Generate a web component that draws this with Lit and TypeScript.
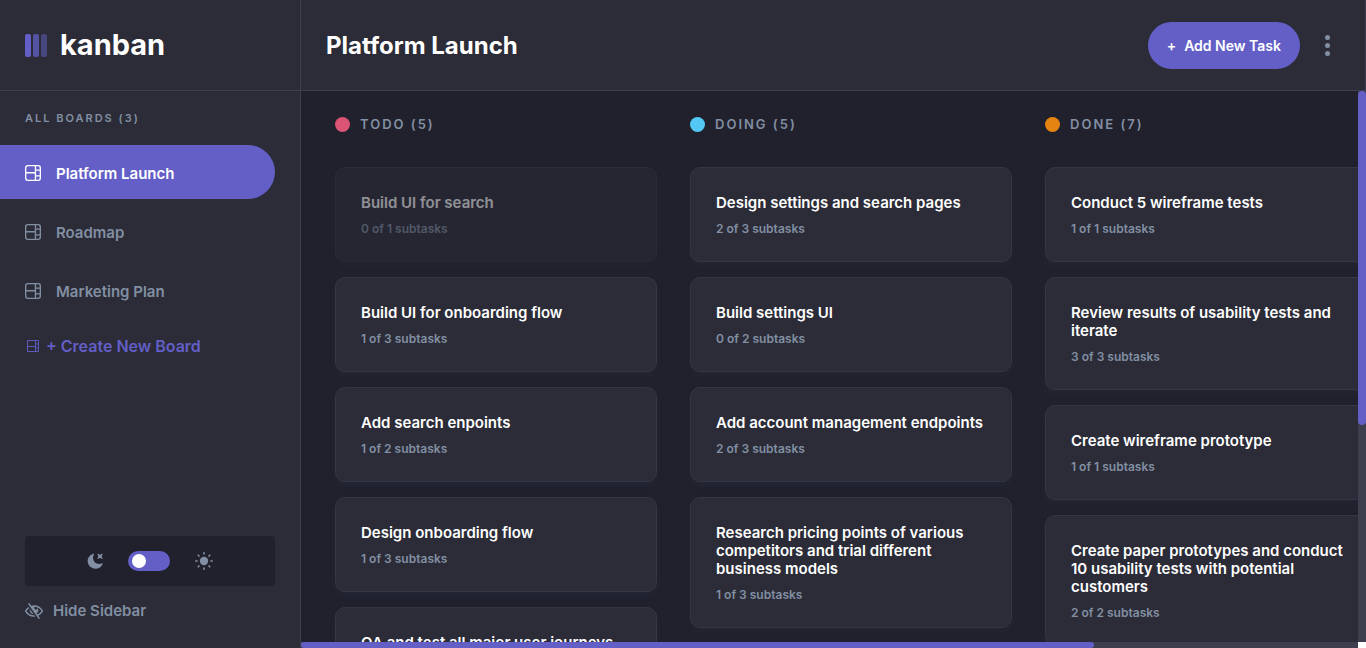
import { LitElement, html, css, svg } from "lit";
import { customElement, property, query, state } from "lit/decorators.js";
import { classMap } from "lit/directives/class-map.js";
import { styleMap } from "lit/directives/style-map.js";

interface Task {
  title: string;
  done: number;
  total: number;
  dragging?: boolean;
}

interface Column {
  name: string;
  tone: "todo" | "doing" | "done";
  tasks: Task[];
}

const COLUMNS: Column[] = [
  {
    name: "TODO",
    tone: "todo",
    tasks: [
      { title: "Build UI for search", done: 0, total: 1, dragging: true },
      { title: "Build UI for onboarding flow", done: 1, total: 3 },
      { title: "Add search enpoints", done: 1, total: 2 },
      { title: "Design onboarding flow", done: 1, total: 3 },
      { title: "QA and test all major user journeys", done: 0, total: 2 },
    ],
  },
  {
    name: "DOING",
    tone: "doing",
    tasks: [
      { title: "Design settings and search pages", done: 2, total: 3 },
      { title: "Build settings UI", done: 0, total: 2 },
      { title: "Add account management endpoints", done: 2, total: 3 },
      { title: "Research pricing points of various competitors and trial different business models", done: 1, total: 3 },
      { title: "Add authentication endpoints", done: 1, total: 2 },
    ],
  },
  {
    name: "DONE",
    tone: "done",
    tasks: [
      { title: "Conduct 5 wireframe tests", done: 1, total: 1 },
      { title: "Review results of usability tests and iterate", done: 3, total: 3 },
      { title: "Create wireframe prototype", done: 1, total: 1 },
      { title: "Create paper prototypes and conduct 10 usability tests with potential customers", done: 2, total: 2 },
      { title: "Market discovery", done: 1, total: 1 },
      { title: "Competitor analysis", done: 2, total: 2 },
      { title: "Research the market", done: 2, total: 2 },
    ],
  },
];

const boardGlyph = svg`<path fill="currentColor" d="M0 2.889A2.889 2.889 0 0 1 2.889 0H13.11A2.889 2.889 0 0 1 16 2.889V13.11A2.888 2.888 0 0 1 13.111 16H2.89A2.889 2.889 0 0 1 0 13.111V2.89Zm1.333 5.555v4.667c0 .859.697 1.556 1.556 1.556h6.889V8.444H1.333Zm8.445-1.333V1.333h-6.89A1.556 1.556 0 0 0 1.334 2.89V7.11h8.445Zm4.889-1.333H11.11v4.444h3.556V5.778Zm0 5.778H11.11v3.11h2a1.556 1.556 0 0 0 1.556-1.555v-1.555Zm0-7.112V2.89a1.555 1.555 0 0 0-1.556-1.556h-2v3.111h3.556Z"/>`;

const sunRays = [0, 45, 90, 135, 180, 225, 270, 315];

@customElement("task-card")
class TaskCard extends LitElement {
  @property({ attribute: false }) task!: Task;

  static styles = css`
    :host { display: block; }
    .card {
      display: flex;
      flex-direction: column;
      gap: 9px;
      padding: 26px 15px 25px 25px;
      background: #2b2c37;
      border: 1px solid #353642;
      border-radius: 10px;
      box-shadow: 0 4px 6px rgba(54, 78, 126, 0.1);
      cursor: pointer;
    }
    .card.dragging { opacity: 0.5; }
    .title {
      margin: 0;
      color: #fff;
      font-size: 15px;
      font-weight: 600;
      line-height: 18px;
    }
    .count {
      margin: 0;
      color: #828fa3;
      font-size: 12px;
      font-weight: 600;
      line-height: 15px;
    }
  `;

  render() {
    const { title, done, total, dragging } = this.task;
    return html`
      <article class=${classMap({ card: true, dragging: !!dragging })}>
        <h3 class="title">${title}</h3>
        <p class="count">${done} of ${total} subtasks</p>
      </article>
    `;
  }
}

@customElement("board-sidebar")
class BoardSidebar extends LitElement {
  @property({ attribute: false }) boards: string[] = [];
  @property() current = "";

  static styles = css`
    :host {
      display: flex;
      flex-direction: column;
      box-sizing: border-box;
      min-height: 0;
      padding: 20px 25px 22px 0;
      background: #2b2c37;
      border-right: 1px solid #3e3f4e;
      color: #828fa3;
    }
    .label {
      margin: 0 0 19px;
      padding-left: 25px;
      font-size: 11px;
      font-weight: 600;
      line-height: 15px;
      letter-spacing: 2px;
    }
    .boards {
      display: flex;
      flex-direction: column;
      gap: 5px;
      margin: 0;
      padding: 0;
      list-style: none;
    }
    .board {
      display: flex;
      align-items: center;
      box-sizing: border-box;
      gap: 15px;
      height: 54px;
      padding: 2px 0 0 25px;
      border-radius: 0 27px 27px 0;
      color: inherit;
      font-size: 15px;
      font-weight: 600;
      text-decoration: none;
    }
    .board.active { background: #635fc7; color: #fff; }
    .icon { flex: none; width: 16px; height: 16px; }
    .create {
      display: flex;
      align-items: center;
      align-self: flex-start;
      gap: 7px;
      margin-top: 18px;
      padding: 0 0 0 27px;
      border: 0;
      background: none;
      color: #635fc7;
      font: inherit;
      font-size: 16px;
      font-weight: 600;
      line-height: 22px;
      cursor: pointer;
    }
    .create .icon { width: 12px; height: 12px; }
    .foot {
      display: flex;
      flex-direction: column;
      gap: 10px;
      margin-top: auto;
      padding-left: 25px;
    }
    .theme {
      display: flex;
      align-items: center;
      justify-content: center;
      gap: 25px;
      height: 50px;
      border-radius: 4px;
      background: #20212c;
    }
    .theme .sun { width: 18px; height: 18px; }
    .switch {
      appearance: none;
      display: flex;
      align-items: center;
      width: 42px;
      height: 20px;
      margin: 0;
      padding: 0 4px;
      border-radius: 10px;
      background: #635fc7;
      cursor: pointer;
    }
    .switch::before {
      content: "";
      width: 14px;
      height: 14px;
      border-radius: 50%;
      background: #fff;
    }
    .switch:checked { justify-content: flex-end; }
    .hide {
      display: flex;
      align-items: center;
      align-self: flex-start;
      gap: 10px;
      padding: 0;
      border: 0;
      background: none;
      color: inherit;
      font: inherit;
      font-size: 15px;
      font-weight: 600;
      line-height: 30px;
      cursor: pointer;
    }
    .hide .icon { width: 18px; }
  `;

  render() {
    return html`
      <h2 class="label">ALL BOARDS (${this.boards.length})</h2>
      <ul class="boards">
        ${this.boards.map(
          (name) => html`
            <li>
              <a href="#" class=${classMap({ board: true, active: name === this.current })}>
                <svg class="icon" viewBox="0 0 16 16" aria-hidden="true">${boardGlyph}</svg>
                <span>${name}</span>
              </a>
            </li>
          `
        )}
      </ul>
      <button class="create" type="button">
        <svg class="icon" viewBox="0 0 12 12" fill="none" stroke="currentColor" aria-hidden="true">
          <path d="M.5.5h11v11H.5zM8.5.5v11M.5 6.5h8M8.5 4h3M8.5 8h3" stroke-width=".9" />
        </svg>
        <span>+ Create New Board</span>
      </button>
      <div class="foot">
        <div class="theme">
          <svg class="icon" viewBox="0 0 16 16" aria-hidden="true">
            <path fill="currentColor" d="M6.474.682c.434-.11.718.406.481.78A6.067 6.067 0 0 0 6.01 4.72c0 3.418 2.827 6.187 6.314 6.187.89.002 1.77-.182 2.584-.54.408-.18.894.165.724.57-1.16 2.775-3.944 4.73-7.194 4.73-4.292 0-7.771-3.41-7.771-7.615 0-3.541 2.466-6.518 5.807-7.37Zm8.433.07c.442-.294.969.232.674.674l-.525.787a1.943 1.943 0 0 0 0 2.157l.525.788c.295.441-.232.968-.674.673l-.787-.525a1.943 1.943 0 0 0-2.157 0l-.786.525c-.442.295-.97-.232-.675-.673l.525-.788a1.943 1.943 0 0 0 0-2.157l-.525-.787c-.295-.442.232-.968.674-.673l.787.525a1.943 1.943 0 0 0 2.157 0Z" />
          </svg>
          <input class="switch" type="checkbox" role="switch" aria-label="Light theme" />
          <svg class="sun" viewBox="0 0 18 18" aria-hidden="true">
            <circle cx="9" cy="9" r="4.2" fill="currentColor" />
            <g stroke="currentColor" stroke-width="1.6" stroke-linecap="round">
              ${sunRays.map((a) => svg`<path d="M9 .8v1.2" transform=${`rotate(${a} 9 9)`} />`)}
            </g>
          </svg>
        </div>
        <button class="hide" type="button">
          <svg class="icon" viewBox="0 0 18 16" aria-hidden="true">
            <path fill="currentColor" d="M8.522 11.223a4.252 4.252 0 0 1-3.654-5.22l3.654 5.22ZM9 12.25A8.685 8.685 0 0 1 1.5 8a8.612 8.612 0 0 1 2.76-2.864l-.86-1.23A10.112 10.112 0 0 0 .208 7.238a1.5 1.5 0 0 0 0 1.524A10.187 10.187 0 0 0 9 13.75c.414 0 .828-.025 1.239-.074l-1-1.43A8.88 8.88 0 0 1 9 12.25Zm8.792-3.488a10.14 10.14 0 0 1-4.486 4.046l1.504 2.148a.375.375 0 0 1-.092.523l-.648.453a.375.375 0 0 1-.523-.092L3.19 1.044A.375.375 0 0 1 3.282.52L3.93.068a.375.375 0 0 1 .523.092l1.735 2.479A10.308 10.308 0 0 1 9 2.25c3.746 0 7.031 2 8.792 4.988a1.5 1.5 0 0 1 0 1.524ZM16.5 8a8.674 8.674 0 0 0-6.755-4.219A1.75 1.75 0 1 0 12.75 5v-.001a4.25 4.25 0 0 1-1.154 5.366l.834 1.192A8.641 8.641 0 0 0 16.5 8Z" />
          </svg>
          <span>Hide Sidebar</span>
        </button>
      </div>
    `;
  }
}

/* Two-axis scroll area with always-visible themed bars. */
@customElement("scroll-pane")
class ScrollPane extends LitElement {
  @state() private view = { top: 0, left: 0, height: 100, width: 100 };
  @query(".port") private port!: HTMLElement;
  @query(".content") private content!: HTMLElement;
  private observer?: ResizeObserver;

  static styles = css`
    :host {
      display: grid;
      grid-template-columns: minmax(0, 1fr) 8px;
      grid-template-rows: minmax(0, 1fr) 6px;
      min-height: 0;
      background: #fff;
    }
    .port {
      overflow: auto;
      scrollbar-width: none;
      background: #20212c;
    }
    .content {
      width: max-content;
      min-width: 100%;
    }
    .track {
      display: flex;
      overflow: hidden;
      background: #3e3f4e;
    }
    .vertical { flex-direction: column; }
    .thumb {
      flex: none;
      border-radius: 5px;
      background: #635fc7;
    }
  `;

  firstUpdated() {
    this.observer = new ResizeObserver(() => this.measure());
    this.observer.observe(this.port);
    this.observer.observe(this.content);
  }

  disconnectedCallback() {
    super.disconnectedCallback();
    this.observer?.disconnect();
  }

  private measure() {
    const p = this.port;
    this.view = {
      top: (p.scrollTop / p.scrollHeight) * p.clientHeight,
      left: (p.scrollLeft / p.scrollWidth) * p.clientWidth,
      height: (p.clientHeight / p.scrollHeight) * 100,
      width: (p.clientWidth / p.scrollWidth) * 100,
    };
  }

  render() {
    const { top, left, height, width } = this.view;
    return html`
      <div class="port" tabindex="0" @scroll=${this.measure}>
        <div class="content"><slot></slot></div>
      </div>
      <div class="track vertical">
        <div class="thumb" style=${styleMap({ height: `${height}%`, marginTop: `${top}px` })}></div>
      </div>
      <div class="track">
        <div class="thumb" style=${styleMap({ width: `${width}%`, marginLeft: `${left}px` })}></div>
      </div>
    `;
  }
}

@customElement("app-root")
class AppRoot extends LitElement {
  @state() private boards = ["Platform Launch", "Roadmap", "Marketing Plan"];
  @state() private current = "Platform Launch";

  static styles = css`
    :host {
      display: grid;
      grid-template-columns: 301px minmax(0, 1fr);
      grid-template-rows: 91px minmax(0, 1fr);
      height: 100vh;
      background: #20212c;
      font-family: Inter, "Noto Sans", sans-serif;
      color: #828fa3;
    }
    .brand, .header {
      display: flex;
      align-items: center;
      background: #2b2c37;
      border-right: 1px solid #3e3f4e;
      border-bottom: 1px solid #3e3f4e;
    }
    .brand { gap: 13px; padding-left: 25px; }
    .mark { width: 22px; height: 23px; color: #635fc7; }
    .word {
      color: #fff;
      font-size: 29px;
      font-weight: 700;
      line-height: 36px;
    }
    .header { justify-content: space-between; padding: 0 35px 0 25px; }
    .heading {
      margin: 0;
      padding-top: 2px;
      color: #fff;
      font-size: 24px;
      font-weight: 700;
      line-height: 30px;
    }
    .actions { display: flex; align-items: center; gap: 25px; }
    .add {
      display: flex;
      align-items: center;
      gap: 8px;
      height: 47px;
      padding: 0 19px;
      border: 0;
      border-radius: 24px;
      background: #635fc7;
      color: #fff;
      font: inherit;
      font-size: 14px;
      font-weight: 600;
      cursor: pointer;
    }
    .more {
      display: flex;
      padding: 0;
      border: 0;
      background: none;
      color: #828fa3;
      cursor: pointer;
    }
    .dots { width: 5px; height: 21px; }
    .canvas {
      display: flex;
      gap: 33px;
      padding: 0 24px 0 34px;
    }
    .column {
      display: flex;
      flex: 0 0 322px;
      flex-direction: column;
      gap: 15px;
      padding: 26px 0 24px;
    }
    .head {
      display: flex;
      align-items: center;
      gap: 10px;
      margin: 0 0 20px;
      color: #828fa3;
      font-size: 13px;
      font-weight: 600;
      line-height: 15px;
      letter-spacing: 2px;
    }
    .dot { width: 15px; height: 15px; border-radius: 50%; }
    .dot.todo { background: #db5375; }
    .dot.doing { background: #54c8f5; }
    .dot.done { background: #e58411; }
    .new {
      flex: 0 0 286px;
      margin: 76px 0 24px;
      border: 0;
      border-radius: 6px;
      background: #2b2c37;
      color: #828fa3;
      font: inherit;
      font-size: 24px;
      font-weight: 700;
      cursor: pointer;
    }
  `;

  render() {
    return html`
      <div class="brand">
        <svg class="mark" viewBox="0 0 22 23" fill="currentColor" aria-hidden="true">
          <rect width="6" height="23" rx="2" />
          <rect x="8" width="6" height="23" rx="2" opacity=".75" />
          <rect x="16" width="6" height="23" rx="2" opacity=".5" />
        </svg>
        <span class="word">kanban</span>
      </div>
      <header class="header">
        <h1 class="heading">${this.current}</h1>
        <div class="actions">
          <button class="add" type="button"><span>+</span><span>Add New Task</span></button>
          <button class="more" type="button" aria-label="Board options">
            <svg class="dots" viewBox="0 0 5 21" fill="currentColor" aria-hidden="true">
              <circle cx="2.5" cy="2.5" r="2.5" />
              <circle cx="2.5" cy="10.5" r="2.5" />
              <circle cx="2.5" cy="18.5" r="2.5" />
            </svg>
          </button>
        </div>
      </header>
      <board-sidebar .boards=${this.boards} .current=${this.current}></board-sidebar>
      <scroll-pane>
        <main class="canvas">
          ${COLUMNS.map(
            (column) => html`
              <section class="column">
                <h2 class="head">
                  <span class="dot ${column.tone}"></span>
                  <span>${column.name} (${column.tasks.length})</span>
                </h2>
                ${column.tasks.map((task) => html`<task-card .task=${task}></task-card>`)}
              </section>
            `
          )}
          <button class="new" type="button">+ New Column</button>
        </main>
      </scroll-pane>
    `;
  }
}
